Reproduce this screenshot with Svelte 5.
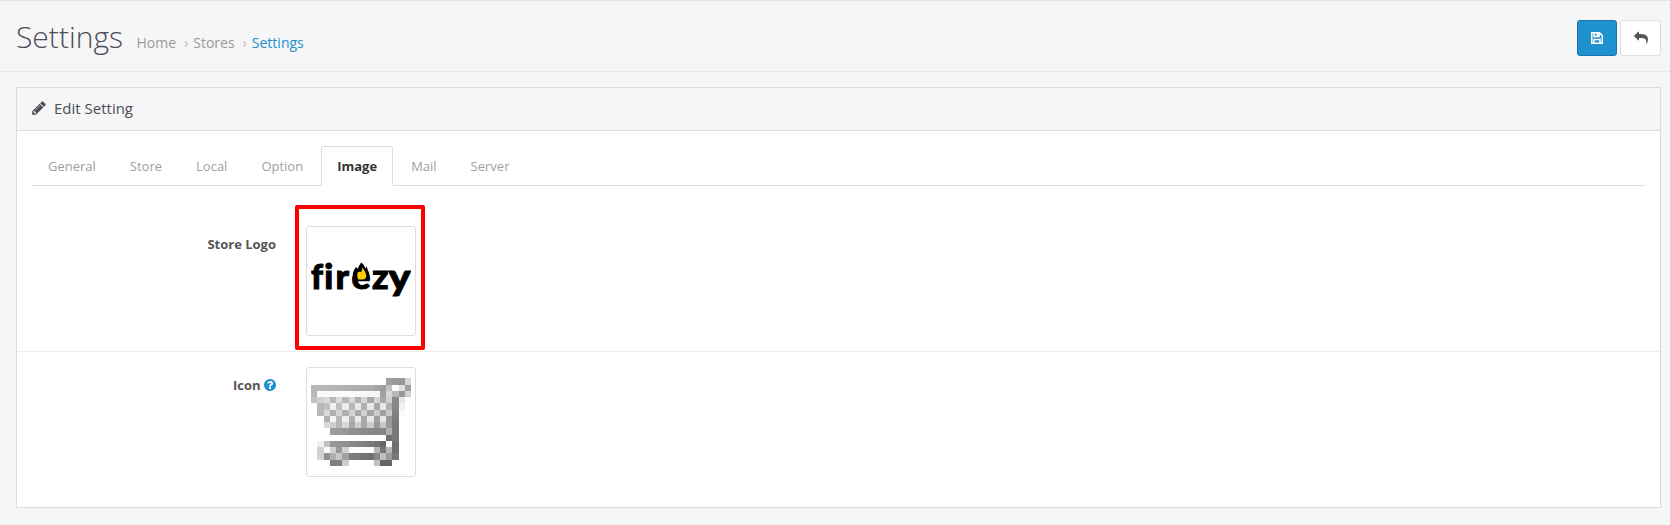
<script>
  const tabs = ['General', 'Store', 'Local', 'Option', 'Image', 'Mail', 'Server'];
  const letters = [
    ['f', 0, 12],
    ['i', 13.2, 9],
    ['r', 24.5, 13.5],
    ['e', 40.5, 19],
    ['z', 61, 16.5]
  ];
  // 16x16 shades of the cart icon, two hex digits per cell, ".." is empty
  const cart = [
    '........................a09a98d8',
    'b8b8b6b5b3b2b0aeacaaa5a0c0fce0a0',
    'b8fafafafafafaf8f8f8f6a0d8b898d0',
    'c0d0dab8dcb8d8b0d4a8d2a8d088e6..',
    '..b8c0f0c0ecb8e8b0e8a8e8b088f2..',
    '..b8d8b0d6b0d4a8d0a4cca0c882fa..',
    '....b0f4b8f0b0eca8e8a0e8987c....',
    '....d8d0b8d8a8d0a8cc98c89878....',
    '......9c9a98928e8a888684b078....',
    '........................7078....',
    '..f0c09894908a84807a7468fc70....',
    '..d0fcd098d0fcfcfcfcb878b870....',
    '..d490b0c8a07c78747088c09a78....',
    '......8080cc........c06464......'
  ];
  const cells = cart.flatMap((row, y) =>
    row.match(/../g).map((v, x) => ({ v, x, y: y + 1 })).filter((c) => c.v !== '..')
  );
</script>

<header>
  <div class="title">
    <h1>Settings</h1>
    <nav><a href="#home">Home</a><i>›</i><a href="#stores">Stores</a><i>›</i><a class="current" href="#settings">Settings</a></nav>
  </div>
  <div class="buttons">
    <button class="save" aria-label="Save">
      <svg width="12" height="12" viewBox="0 0 12 12"><path fill="none" stroke="currentColor" stroke-width="1.500" d="M.75.75h7.700l2.800 2.800v7.700H.75ZM3 1v3.600h5V1M3 11V7.500h6V11" /><path fill="currentColor" d="M5.500 1H7v3H5.500Z" /></svg>
    </button>
    <button class="back" aria-label="Back">
      <svg width="14" height="14" viewBox="0 0 1792 1792"><path fill="currentColor" d="M1792 1120q0 166-127 451-3 7-10.500 24t-13.500 30-13 22q-12 17-28 17-15 0-23.500-10t-8.500-25q0-9 2.500-26.500t2.500-23.500q5-68 5-123 0-101-17.500-181t-48.500-138.500-80-101-105.500-69.500-133-42.500-154-21.500-175.500-6H640v256q0 26-19 45t-45 19-45-19L19 685Q0 666 0 640t19-45L531 83q19-19 45-19t45 19 19 45v256h224q713 0 875 403 53 134 53 333z"/></svg>
    </button>
  </div>
</header>

<main>
  <div class="heading">
    <svg width="14" height="16" viewBox="0 0 1536 1792"><path fill="currentColor" d="M363 1536l91-91-235-235-91 91v107h128v128h107zm523-928q0-22-22-22-10 0-17 7l-542 542q-7 7-7 17 0 22 22 22 10 0 17-7l542-542q7-7 7-17zm-54-192l416 416-832 832H0v-416zm683 96q0 53-37 90l-166 166-416-416 166-165q36-38 90-38 53 0 91 38l235 234q37 39 37 91z"/></svg>
    <h3>Edit Setting</h3>
  </div>
  <div class="body">
    <ul class="tabs">
      {#each tabs as tab}
        <li class:active={tab === 'Image'}>{tab}</li>
      {/each}
    </ul>
    <div class="group first">
      <div class="label">Store Logo</div>
      <div class="highlight">
        <div class="thumb">
          <svg width="100" height="100" viewBox="0 0 100 100" role="img" aria-label="Store logo">
            <g class="brand">
              {#each letters as [ch, x, w]}
                <text {x} y="58" textLength={w} lengthAdjust="spacingAndGlyphs">{ch}</text>
              {/each}
              <text class="tail" x="77.500" y="59" textLength="22" lengthAdjust="spacingAndGlyphs">y</text>
            </g>
            <path d="M42 49C41 42 43 39 45 36l2 2C47 35 49 34 50 31.500c3 2 4 4 4 6l2-2c0 4 3 5 2.500 11l-2 3Z" />
            <path fill="#fc0" d="M47 48c-1.500-5-.5-8 2-7 2 0 2-2 2-4.500 3 3 5 7 4 10q-1 2-3 2h-3q-2 0-2-.5Z" />
          </svg>
        </div>
      </div>
    </div>
    <div class="group">
      <div class="label">Icon
        <svg class="help" width="12" height="14" viewBox="0 0 1536 1792"><path fill="currentColor" d="M896 1376v-192q0-14-9-23t-23-9H672q-14 0-23 9t-9 23v192q0 14 9 23t23 9h192q14 0 23-9t9-23zm256-672q0-88-55.500-163T958 425t-170-41q-243 0-371 213-15 24 8 42l132 100q7 6 19 6 16 0 25-12 53-68 86-92 34-24 86-24 48 0 85.500 26t37.500 59q0 38-20 61t-68 45q-63 28-115.500 86.500T640 1020v36q0 14 9 23t23 9h192q14 0 23-9t9-23q0-19 21.500-49.500T972 957q32-18 49-28.500t46-35 44.500-48 28-60.500 12.500-81zm384 192q0 209-103 385.500T1153.500 1561 768 1664t-385.500-103T103 1281.500 0 896t103-385.500T382.500 231 768 128t385.500 103T1433 510.500 1536 896z"/></svg>
      </div>
      <div class="thumb">
        <svg width="100" height="100" viewBox="0 0 16 16" role="img" aria-label="Icon">
          {#each cells as c}
            <rect x={c.x} y={c.y} width="1" height="1" fill={'#' + c.v + c.v + c.v} />
          {/each}
        </svg>
      </div>
    </div>
  </div>
</main>

<style>
  :global(body) {
    background: #f6f6f6;
    font-family: 'Open Sans', sans-serif;
    font-size: 13px;
    line-height: 20px;
    color: #666;
  }
  :global(#app *) { box-sizing: border-box; }
  svg { display: block; }
  header {
    height: 72px;
    border-top: 1px solid #e4e4e4;
    border-bottom: 1px solid #e7e7e7;
    padding: 19px 9px 0 16px;
    display: flex;
    justify-content: space-between;
  }
  .title { display: flex; align-items: baseline; height: 36px; margin-top: -1px; }
  h1 {
    margin: 0;
    font-size: 30px;
    line-height: 36px;
    font-weight: 300;
    color: #4c4d5a;
  }
  nav { margin-left: 13.5px; font-size: 14px; color: #999; display: flex; }
  nav a { color: #999; text-decoration: none; }
  nav i { font-style: normal; color: #bbb; padding: 0 5px 0 8px; }
  nav .current { color: #1e91cf; }
  .buttons { display: flex; gap: 3px; }
  button {
    width: 40px;
    height: 36px;
    border-radius: 3px;
    padding: 0;
    display: flex;
    align-items: center;
    justify-content: center;
  }
  .save { color: #fff; background: #1e91cf; border: 1px solid #1978ab; }
  .back { width: 41px; color: #555; background: #fff; border: 1px solid #ddd; }
  main {
    margin: 15px 9px 0 16px;
    height: 421px;
    background: #fff;
    border: 1px solid #dcdcdc;
    box-shadow: 0 1px 1px rgba(0, 0, 0, 0.05);
  }
  .heading {
    height: 43px;
    border-bottom: 1px solid #dcdcdc;
    background: #f6f6f6;
    color: #4c4d5a;
    padding: 0 0 2px 15px;
    display: flex;
    align-items: center;
    gap: 8px;
  }
  h3 { margin: 0; font-size: 15px; font-weight: 400; }
  .body { padding-top: 15px; }
  .tabs {
    list-style: none;
    margin: 0 15px;
    padding: 0;
    height: 40px;
    border-bottom: 1px solid #ddd;
    display: flex;
    gap: 2px;
  }
  li {
    height: 40px;
    padding: 9px 15px;
    border: 1px solid transparent;
    color: #a0a0a0;
  }
  li.active {
    background: #fff;
    border-color: #ddd #ddd #fff;
    border-radius: 2px 2px 0 0;
    color: #333;
    font-weight: 700;
  }
  .group { display: flex; align-items: flex-start; padding-top: 15px; }
  .first { height: 166px; border-bottom: 1px solid #ededed; padding-top: 19px; }
  .label {
    width: 259px;
    margin-right: 30px;
    padding-top: 8px;
    display: flex;
    justify-content: flex-end;
    gap: 3.5px;
    font-weight: 700;
    color: #555;
  }
  .first .label { padding-top: 29px; }
  .help { color: #1e91cf; margin-top: 3px; }
  .highlight {
    width: 130px;
    height: 145px;
    margin-left: -11px;
    border: 4px solid #f00;
    border-radius: 2px;
    padding: 17px 7px;
  }
  .thumb {
    width: 110px;
    height: 110px;
    padding: 4px;
    border: 1px solid #ddd;
    border-radius: 3px;
    background: #fff;
  }
  .brand {
    font-family: Lato, sans-serif;
    font-size: 34px;
    font-weight: 900;
    stroke: #000;
    stroke-width: 1;
  }
  .tail { font-size: 36px; }
  rect { shape-rendering: crispEdges; }
</style>
